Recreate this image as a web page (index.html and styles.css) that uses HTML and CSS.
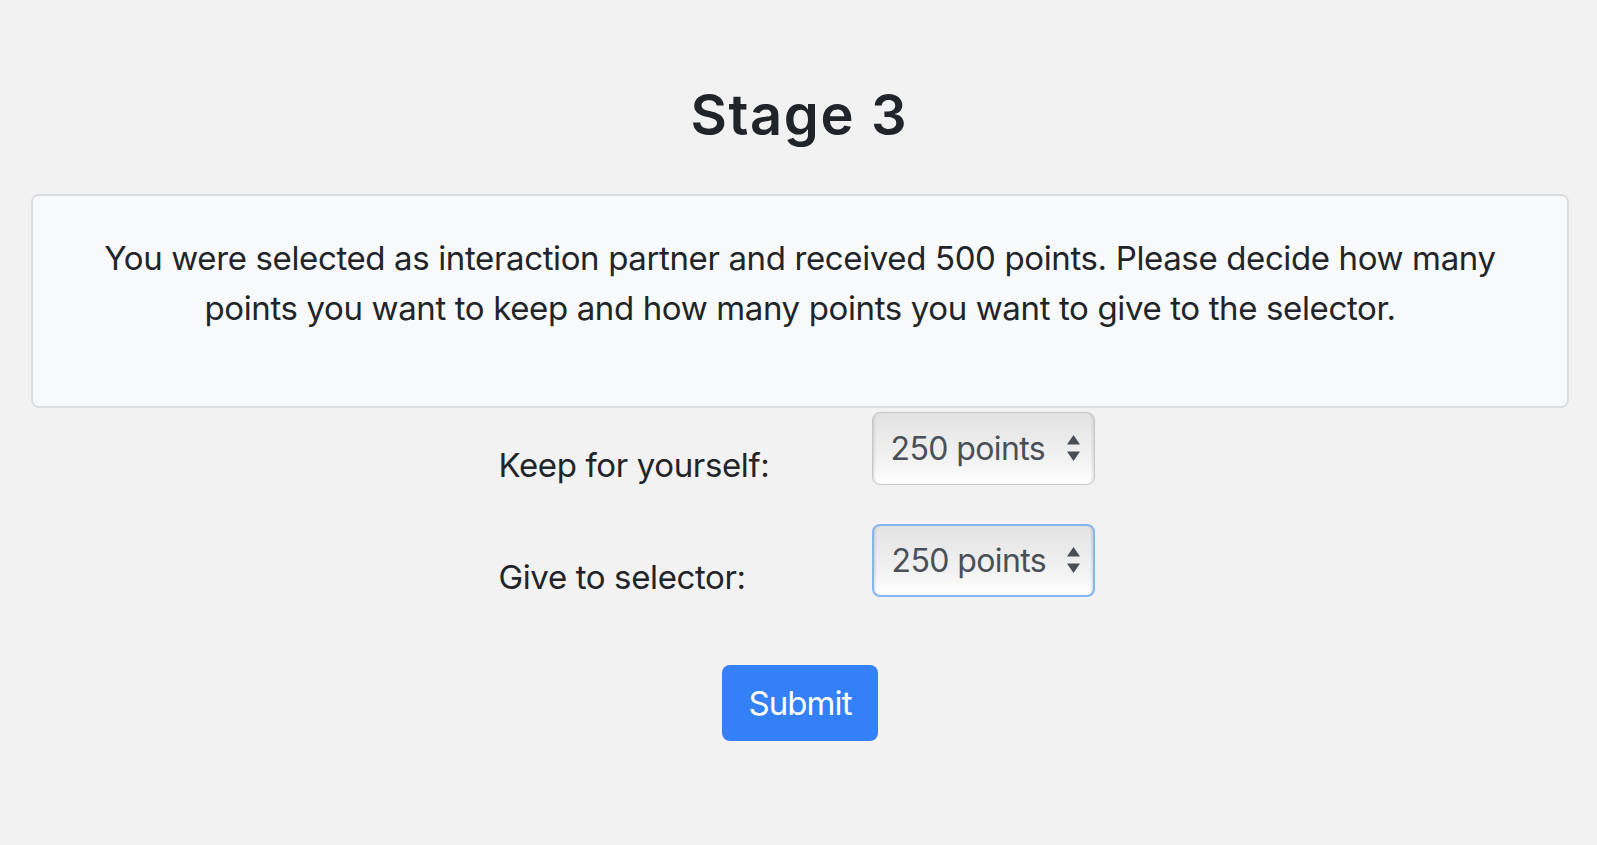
FILE: index.html
```html
<!DOCTYPE html>
<html lang="en">
<head>
<meta charset="utf-8">
<title>Stage 3</title>
<link rel="stylesheet" href="styles.css">
</head>
<body>
<main class="page">
  <h1 class="title">Stage 3</h1>
  <section class="panel">
    <p class="intro">You were selected as interaction partner and received 500 points. Please decide how many points you want to keep and how many points you want to give to the selector.</p>
  </section>
  <form class="form">
    <div class="row">
      <label class="label" for="keep">Keep for yourself:</label>
      <div class="select-wrap">
        <select id="keep" class="select"><option>250 points</option></select>
        <span class="arrows" aria-hidden="true"><svg width="13" height="27" viewBox="0 0 13 27"><path d="M6.5 0 L13 9.5 L0 9.5 Z" fill="#4a4f55"/><path d="M0 16.5 L13 16.5 L6.5 26 Z" fill="#4a4f55"/></svg></span>
      </div>
    </div>
    <div class="row">
      <label class="label" for="give">Give to selector:</label>
      <div class="select-wrap">
        <select id="give" class="select focused"><option>250 points</option></select>
        <span class="arrows" aria-hidden="true"><svg width="13" height="27" viewBox="0 0 13 27"><path d="M6.5 0 L13 9.5 L0 9.5 Z" fill="#4a4f55"/><path d="M0 16.5 L13 16.5 L6.5 26 Z" fill="#4a4f55"/></svg></span>
      </div>
    </div>
    <div class="actions">
      <button type="button" class="btn">Submit</button>
    </div>
  </form>
</main>
</body>
</html>
```
FILE: styles.css
```css
html, body {
  margin: 0;
  padding: 0;
  background: #f2f2f2;
}
body {
  font-family: Inter, "Noto Sans", "Liberation Sans", sans-serif;
  color: #212529;
}
.page {
  padding-top: 82px;
}
.title {
  margin: 0 0 46px;
  text-align: center;
  font-size: 56px;
  line-height: 66px;
  font-weight: 600;
  letter-spacing: 1.6px;
  text-indent: 1.6px;
  color: #212529;
}
.panel {
  margin: 0 28px 0 31px;
  background: #f8f9fa;
  border: 2px solid #dcdddf;
  border-radius: 8px;
  padding: 37px 40px 73px;
}
.intro {
  margin: 0;
  text-align: center;
  font-size: 33px;
  line-height: 50px;
  letter-spacing: -0.37px;
}
.form {
  padding-top: 4px;
  display: flex;
  flex-direction: column;
  gap: 34px;
}
.row {
  display: grid;
  grid-template-columns: 373px 223px;
  justify-content: center;
  padding-right: 4px;
}
.label {
  font-size: 33px;
  line-height: 50px;
  letter-spacing: -0.37px;
  padding-top: 28px;
}
.select-wrap {
  position: relative;
  width: 223px;
  height: 73px;
}
.select {
  -webkit-appearance: none;
  appearance: none;
  box-sizing: border-box;
  width: 100%;
  height: 100%;
  margin: 0;
  padding: 0 0 0 18px;
  font-family: inherit;
  font-size: 32px;
  letter-spacing: -0.6px;
  color: #495057;
  border: 1.5px solid #c6c8cb;
  border-radius: 8px;
  background: linear-gradient(#e3e3e3, #f2f2f2 65%, #ffffff);
  box-shadow: inset 3px 0 3px -2px rgba(0,0,0,0.14), inset -3px 0 3px -2px rgba(0,0,0,0.14);
  outline: none;
}
.select.focused {
  border: 2px solid #86b5f5;
}
.arrows {
  position: absolute;
  right: 15px;
  top: 23px;
  width: 13px;
  height: 27px;
  pointer-events: none;
}
.arrows svg {
  display: block;
}
.actions {
  display: flex;
  justify-content: center;
  padding-top: 29px;
  padding-left: 3px;
}
.btn {
  font-family: inherit;
  font-size: 33px;
  line-height: 50px;
  letter-spacing: -0.9px;
  color: #ffffff;
  background: #3480f6;
  border: none;
  border-radius: 8px;
  padding: 13px 26px;
  cursor: pointer;
}
```
